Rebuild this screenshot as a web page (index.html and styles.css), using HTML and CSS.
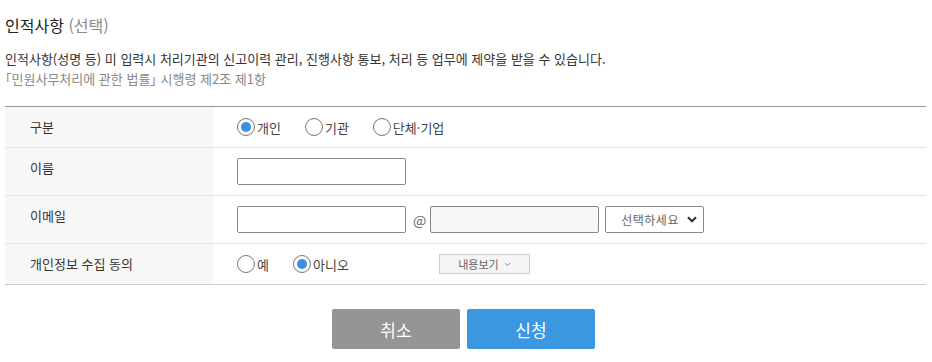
FILE: index.html
```html
<!DOCTYPE html>
<html lang="ko">
<head>
<meta charset="utf-8">
<title>인적사항</title>
<link rel="stylesheet" href="styles.css">
</head>
<body>
<div class="wrap">
  <h2 class="title">인적사항 <span class="opt">(선택)</span></h2>
  <p class="desc">인적사항(성명 등) 미 입력시 처리기관의 신고이력 관리, 진행사항 통보, 처리 등 업무에 제약을 받을 수 있습니다.</p>
  <p class="law">「민원사무처리에 관한 법률」 시행령 제2조 제1항</p>

  <div class="table">
    <div class="row">
      <div class="th">구분</div>
      <div class="td">
        <label class="radio"><span class="dot on"></span><span class="rl">개인</span></label>
        <label class="radio"><span class="dot"></span><span class="rl">기관</span></label>
        <label class="radio"><span class="dot"></span><span class="rl">단체·기업</span></label>
      </div>
    </div>
    <div class="row">
      <div class="th">이름</div>
      <div class="td"><span class="input"></span></div>
    </div>
    <div class="row">
      <div class="th">이메일</div>
      <div class="td">
        <span class="input"></span>
        <span class="at">@</span>
        <span class="input ro"></span>
        <span class="select"><span class="stext">선택하세요</span>
          <svg class="chev" width="10" height="7" viewBox="0 0 10 7"><path d="M1 1.2 L5 5.2 L9 1.2" fill="none" stroke="#333" stroke-width="2.2"/></svg>
        </span>
      </div>
    </div>
    <div class="row last">
      <div class="th">개인정보 수집 동의</div>
      <div class="td">
        <div class="rgroup">
          <label class="radio"><span class="dot"></span><span class="rl">예</span></label>
          <label class="radio"><span class="dot on"></span><span class="rl">아니오</span></label>
        </div>
        <span class="more">내용보기 <svg width="7" height="5" viewBox="0 0 7 5"><path d="M0.8 1 L3.5 3.7 L6.2 1" fill="none" stroke="#888" stroke-width="1"/></svg></span>
      </div>
    </div>
  </div>

  <div class="btns">
    <span class="btn cancel">취소</span>
    <span class="btn ok">신청</span>
  </div>
</div>
</body>
</html>
```

FILE: styles.css
```css
* { box-sizing: border-box; }
html, body { margin: 0; padding: 0; background: #fff; }
body {
  font-family: "Noto Sans CJK KR", "Noto Sans", sans-serif;
  color: #333;
}
.wrap {
  width: 921px;
  margin-left: 5px;
}
.title {
  margin: 13px 0 0;
  font-size: 16px;
  line-height: 24px;
  font-weight: 400;
  color: #222;
}
.title .opt { color: #888; }
.desc {
  margin: 12px 0 0;
  font-size: 13px;
  line-height: 20px;
  color: #333;
}
.law {
  margin: 0;
  font-size: 13px;
  line-height: 20px;
  color: #888;
  font-feature-settings: "palt";
}
.table {
  margin-top: 17px;
  border-top: 1px solid #999;
}
.row {
  display: grid;
  grid-template-columns: 208px 1fr;
  border-bottom: 1px solid #e5e5e5;
}
.row.last { border-bottom-color: #ccc; }
.th {
  background: #f7f7f7;
  padding: 11px 0 0 25px;
  font-size: 13px;
  line-height: 18px;
  color: #333;
}
.td {
  display: flex;
  align-items: center;
  padding: 10px 24px;
  min-height: 40px;
}
.radio {
  display: flex;
  align-items: center;
  height: 20px;
  margin-right: 24px;
  font-size: 13px;
  color: #444;
}
.dot {
  width: 18px;
  height: 18px;
  border: 1px solid #777;
  border-radius: 50%;
  margin-right: 2px;
  display: flex;
  align-items: center;
  justify-content: center;
}
.dot.on::after {
  content: "";
  width: 10px;
  height: 10px;
  border-radius: 50%;
  background: #3a8fe2;
}
.rgroup {
  display: flex;
  width: 202px;
}
.input {
  display: block;
  width: 169px;
  height: 27px;
  border: 1px solid #888;
  border-radius: 2px;
  background: #fff;
}
.input.ro { background: #f7f7f7; }
.at {
  font-size: 14px;
  color: #666;
  margin: 0 4px 0 7px;
}
.select {
  display: flex;
  align-items: center;
  justify-content: space-between;
  width: 99px;
  height: 27px;
  margin-left: 6px;
  border: 1px solid #888;
  border-radius: 2px;
  padding: 0 6px 0 15px;
  font-size: 12px;
  color: #666;
}
.stext { letter-spacing: 0.5px; }
.more {
  display: flex;
  align-items: center;
  justify-content: center;
  gap: 5px;
  width: 91px;
  height: 20px;
  border: 1px solid #ccc;
  background: #f5f5f5;
  font-size: 11px;
  color: #666;
}
.btns {
  display: flex;
  justify-content: center;
  gap: 7px;
  margin-top: 24px;
  padding-right: 4px;
}
.btn {
  display: flex;
  align-items: center;
  justify-content: center;
  width: 128px;
  height: 40px;
  border-radius: 2px;
  color: #fff;
  font-size: 17px;
}
.cancel { background: #959595; }
.ok { background: #3a97e0; }
```
